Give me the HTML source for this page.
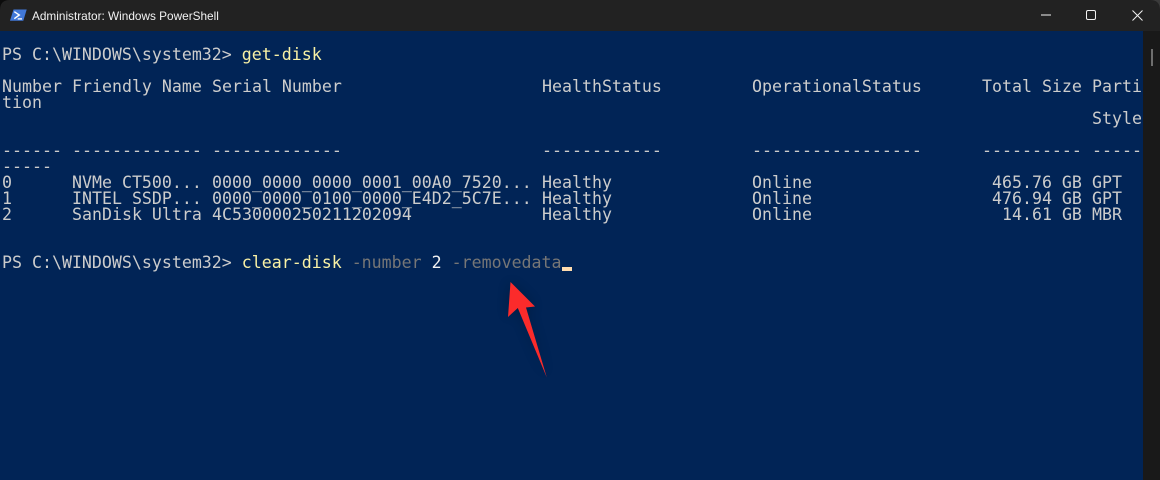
<!DOCTYPE html>
<html><head><meta charset="utf-8">
<style>
html,body{margin:0;padding:0;background:#1a1a1a}
#w{position:relative;width:1160px;height:480px;overflow:hidden;background:#012456}
#tb{position:absolute;left:0;top:0;width:1160px;height:31px;background:#222222}
#sb{position:absolute;left:1143px;top:31px;width:17px;height:449px;background:#191919}
#th{position:absolute;left:1151px;top:49px;width:2px;height:17px;background:#6e6e6e}
#t{position:absolute;left:32px;top:8px;font:11.8px/16px "Liberation Sans",sans-serif;color:#f2f2f2;white-space:pre}
.l{position:absolute;margin-top:1px;font-family:"DejaVu Sans Mono","Liberation Mono",monospace;font-size:16.6px;line-height:16px;height:16px;color:#cccccc;white-space:pre}
.y{color:#f9f1a5}.g{color:#767676}.w{color:#f2f2f2}
svg{position:absolute;left:0;top:0}
</style></head><body><div id="w">
<div id="tb"></div><div id="sb"></div><div id="th"></div>
<svg width="1160" height="480" viewBox="0 0 1160 480">
<defs><filter id="s" x="-50%" y="-50%" width="200%" height="200%"><feGaussianBlur stdDeviation="6"/></filter></defs>
<path d="M0 31V10Q0 0 10 0H0Z" fill="#0c0c0c"/>
<path d="M1160 10Q1160 0 1150 0H1160Z" fill="#3a3a3a"/>
<path d="M13.500 9.500H26.700L23.300 20.700H10Z" fill="#4178d8"/>
<path d="M14.300 11.700L19.300 15L14.300 18.700" fill="none" stroke="#fff" stroke-width="1.400"/>
<path d="M17.700 18.900H22" stroke="#fff" stroke-width="1.300"/>
<path d="M1041 15H1051" stroke="#f2f2f2" stroke-width="1"/>
<rect x="1086.500" y="10.500" width="9" height="9" rx="1.500" fill="none" stroke="#f2f2f2" stroke-width="1"/>
<path d="M1132.500 10.500L1142.500 20.500M1142.500 10.500L1132.500 20.500" stroke="#f2f2f2" stroke-width="1"/>
<path d="M510 282L535 306.500L526 308L547 378L518 308L508 317Z" fill="#000" opacity=".22" filter="url(#s)"/>
<path d="M510.500 282L535 306.500L526 307.500L546.800 377.500L517.800 308L508 317Z" fill="#fb2b2b"/>
</svg>
<div id="t">Administrator: Windows PowerShell</div>

<div class="l" style="left:2px;top:46px">PS C:\WINDOWS\system32&gt; <span class="y">get-disk</span></div>

<div class="l" style="left:2px;top:78px">Number</div>
<div class="l" style="left:72px;top:78px">Friendly Name</div>
<div class="l" style="left:212px;top:78px">Serial Number</div>
<div class="l" style="left:542px;top:78px">HealthStatus</div>
<div class="l" style="left:752px;top:78px">OperationalStatus</div>
<div class="l" style="left:982px;top:78px">Total Size</div>
<div class="l" style="left:1092px;top:78px">Parti</div>
<div class="l" style="left:2px;top:94px">tion</div>
<div class="l" style="left:1092px;top:110px">Style</div>

<div class="l" style="left:2px;top:142px">------</div>
<div class="l" style="left:72px;top:142px">-------------</div>
<div class="l" style="left:212px;top:142px">-------------</div>
<div class="l" style="left:542px;top:142px">------------</div>
<div class="l" style="left:752px;top:142px">-----------------</div>
<div class="l" style="left:982px;top:142px">----------</div>
<div class="l" style="left:1092px;top:142px">-----</div>
<div class="l" style="left:2px;top:158px">-----</div>

<div class="l" style="left:2px;top:174px">0</div>
<div class="l" style="left:72px;top:174px">NVMe CT500...</div>
<div class="l" style="left:212px;top:174px">0000_0000_0000_0001_00A0_7520...</div>
<div class="l" style="left:542px;top:174px">Healthy</div>
<div class="l" style="left:752px;top:174px">Online</div>
<div class="l" style="left:992px;top:174px">465.76 GB</div>
<div class="l" style="left:1092px;top:174px">GPT</div>

<div class="l" style="left:2px;top:190px">1</div>
<div class="l" style="left:72px;top:190px">INTEL SSDP...</div>
<div class="l" style="left:212px;top:190px">0000_0000_0100_0000_E4D2_5C7E...</div>
<div class="l" style="left:542px;top:190px">Healthy</div>
<div class="l" style="left:752px;top:190px">Online</div>
<div class="l" style="left:992px;top:190px">476.94 GB</div>
<div class="l" style="left:1092px;top:190px">GPT</div>

<div class="l" style="left:2px;top:206px">2</div>
<div class="l" style="left:72px;top:206px">SanDisk Ultra</div>
<div class="l" style="left:212px;top:206px">4C530000250211202094</div>
<div class="l" style="left:542px;top:206px">Healthy</div>
<div class="l" style="left:752px;top:206px">Online</div>
<div class="l" style="left:1002px;top:206px">14.61 GB</div>
<div class="l" style="left:1092px;top:206px">MBR</div>

<div class="l" style="left:2px;top:254px">PS C:\WINDOWS\system32&gt; <span class="y">clear-disk</span> <span class="g">-number</span> <span class="w">2</span> <span class="g">-removedata</span></div>
<div style="position:absolute;left:562px;top:267px;width:10px;height:4px;background:#ffdcae"></div>
</div></body></html>
